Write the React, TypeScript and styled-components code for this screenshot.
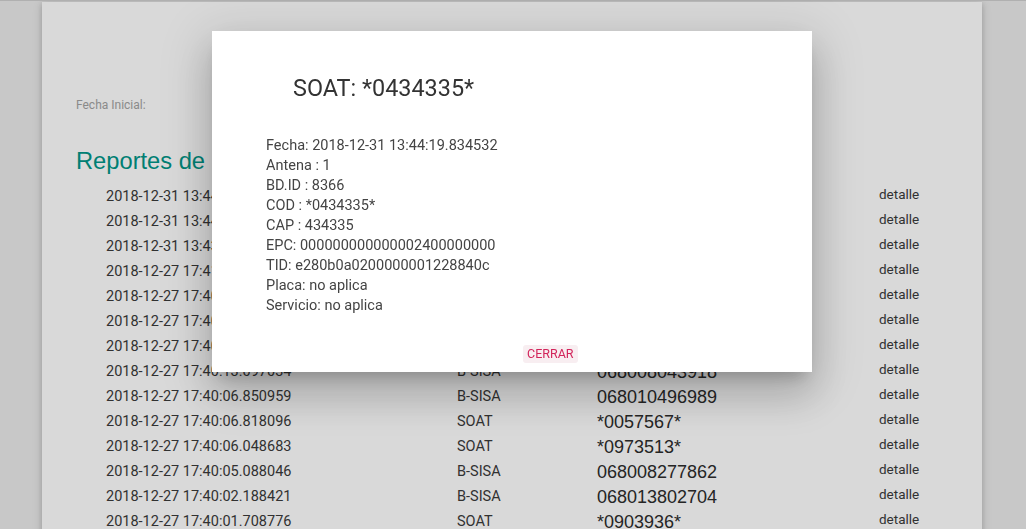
import React from "react";
import styled, { createGlobalStyle } from "styled-components";

const GlobalStyle = createGlobalStyle`
  html, body { margin: 0; padding: 0; height: 100%; overflow: hidden; }
  body {
    background: #ebebeb;
    font-family: Roboto, "Liberation Sans", sans-serif;
    color: rgba(0, 0, 0, 0.87);
    border-top: 1px solid #cfcfcf;
  }
`;

const Page = styled.div`
  display: flex;
  padding-left: 42px;
`;

const Card = styled.main`
  width: 940px;
  min-height: 560px;
  margin-top: 1px;
  background: #fff;
  box-shadow: 0 2px 5px 0 rgba(0, 0, 0, 0.16), 0 2px 10px 0 rgba(0, 0, 0, 0.12);
  padding: 95px 0 0 34px;
  box-sizing: border-box;
`;

const Label = styled.label`
  display: block;
  font-size: 12px;
  line-height: 16px;
  color: #a3a3a3;
`;

const Heading = styled.h5`
  margin: 34px 0 0;
  font-family: "Liberation Sans", Arial, sans-serif;
  font-weight: 400;
  font-size: 23.7px;
  line-height: 28px;
  color: #009688;
`;

const Table = styled.div`
  display: flex;
  flex-direction: column;
  margin: 7px 0 0 30px;
`;

const Row = styled.div`
  display: grid;
  grid-template-columns: 351px 140px 282px auto;
  grid-template-rows: 25px;
  height: 25px;
  align-items: start;
  color: #3a3a3a;
`;

const Cell = styled.span<{ $shift?: number }>`
  line-height: 25px;
  white-space: nowrap;
  padding-top: ${(p) => p.$shift ?? 0}px;
`;

const DateCell = styled(Cell)`
  font-size: 14.5px;
`;

const TypeCell = styled(Cell)`
  font-size: 14.5px;
`;

const CodeCell = styled(Cell)`
  font-family: "Liberation Sans", Arial, sans-serif;
  font-size: 18px;
  color: #2c2c2c;
`;

const DetailCell = styled(Cell)`
  font-size: 13.5px;
  color: #3a3a3a;
`;

const Overlay = styled.div`
  position: fixed;
  inset: 0;
  background: rgba(0, 0, 0, 0.15);
`;

const Modal = styled.div`
  position: fixed;
  top: 31px;
  left: 212px;
  width: 600px;
  height: 341px;
  background: #fff;
  box-shadow: 0 24px 38px 3px rgba(0, 0, 0, 0.14), 0 9px 46px 8px rgba(0, 0, 0, 0.12),
    0 11px 15px -7px rgba(0, 0, 0, 0.2);
  display: flex;
  flex-direction: column;
`;

const ModalContent = styled.div`
  padding: 43px 54px 0;
`;

const Title = styled.h4`
  margin: 0 0 0 27px;
  font-weight: 400;
  font-size: 23.4px;
  line-height: 28px;
  color: #333;
`;

const Details = styled.div`
  margin-top: 34px;
  display: flex;
  flex-direction: column;
`;

const DetailLine = styled.div`
  font-size: 14.5px;
  font-weight: 400;
  line-height: 20px;
  color: #444;
  white-space: nowrap;
`;

const Footer = styled.div`
  display: flex;
  padding: 29px 0 0 311px;
`;

const FlatButton = styled.button`
  border: none;
  background: #f8eef1;
  color: #d2245a;
  font-family: Roboto, sans-serif;
  font-size: 12.5px;
  line-height: 18px;
  height: 18px;
  padding: 0 4px;
  border-radius: 3px;
  text-transform: uppercase;
  cursor: pointer;
`;

const rows: [string, string, string][] = [
  ["2018-12-31 13:44:19.834532", "SOAT", "*0434335*"],
  ["2018-12-31 13:44:19.102377", "B-SISA", "068010496989"],
  ["2018-12-31 13:43:58.611204", "SOAT", "*0057567*"],
  ["2018-12-27 17:41:02.517963", "B-SISA", "068008277862"],
  ["2018-12-27 17:40:48.230118", "SOAT", "*0973513*"],
  ["2018-12-27 17:40:31.901452", "B-SISA", "068013802704"],
  ["2018-12-27 17:40:22.437810", "SOAT", "*0903936*"],
  ["2018-12-27 17:40:13.097034", "B-SISA", "068008043918"],
  ["2018-12-27 17:40:06.850959", "B-SISA", "068010496989"],
  ["2018-12-27 17:40:06.818096", "SOAT", "*0057567*"],
  ["2018-12-27 17:40:06.048683", "SOAT", "*0973513*"],
  ["2018-12-27 17:40:05.088046", "B-SISA", "068008277862"],
  ["2018-12-27 17:40:02.188421", "B-SISA", "068013802704"],
  ["2018-12-27 17:40:01.708776", "SOAT", "*0903936*"],
];

const details = [
  "Fecha: 2018-12-31 13:44:19.834532",
  "Antena : 1",
  "BD.ID : 8366",
  "COD : *0434335*",
  "CAP : 434335",
  "EPC: 000000000000002400000000",
  "TID: e280b0a0200000001228840c",
  "Placa: no aplica",
  "Servicio: no aplica",
];

export default function App() {
  return (
    <>
      <GlobalStyle />
      <Page>
        <Card>
          <Label>Fecha Inicial:</Label>
          <Heading>Reportes de lecturas</Heading>
          <Table>
            {rows.map(([d, t, c], i) => (
              <Row key={i}>
                <DateCell $shift={2}>{d}</DateCell>
                <TypeCell $shift={2}>{t}</TypeCell>
                <CodeCell $shift={3}>{c}</CodeCell>
                <DetailCell>detalle</DetailCell>
              </Row>
            ))}
          </Table>
        </Card>
      </Page>
      <Overlay />
      <Modal>
        <ModalContent>
          <Title>SOAT: *0434335*</Title>
          <Details>
            {details.map((l) => (
              <DetailLine key={l}>{l}</DetailLine>
            ))}
          </Details>
        </ModalContent>
        <Footer>
          <FlatButton>Cerrar</FlatButton>
        </Footer>
      </Modal>
    </>
  );
}
